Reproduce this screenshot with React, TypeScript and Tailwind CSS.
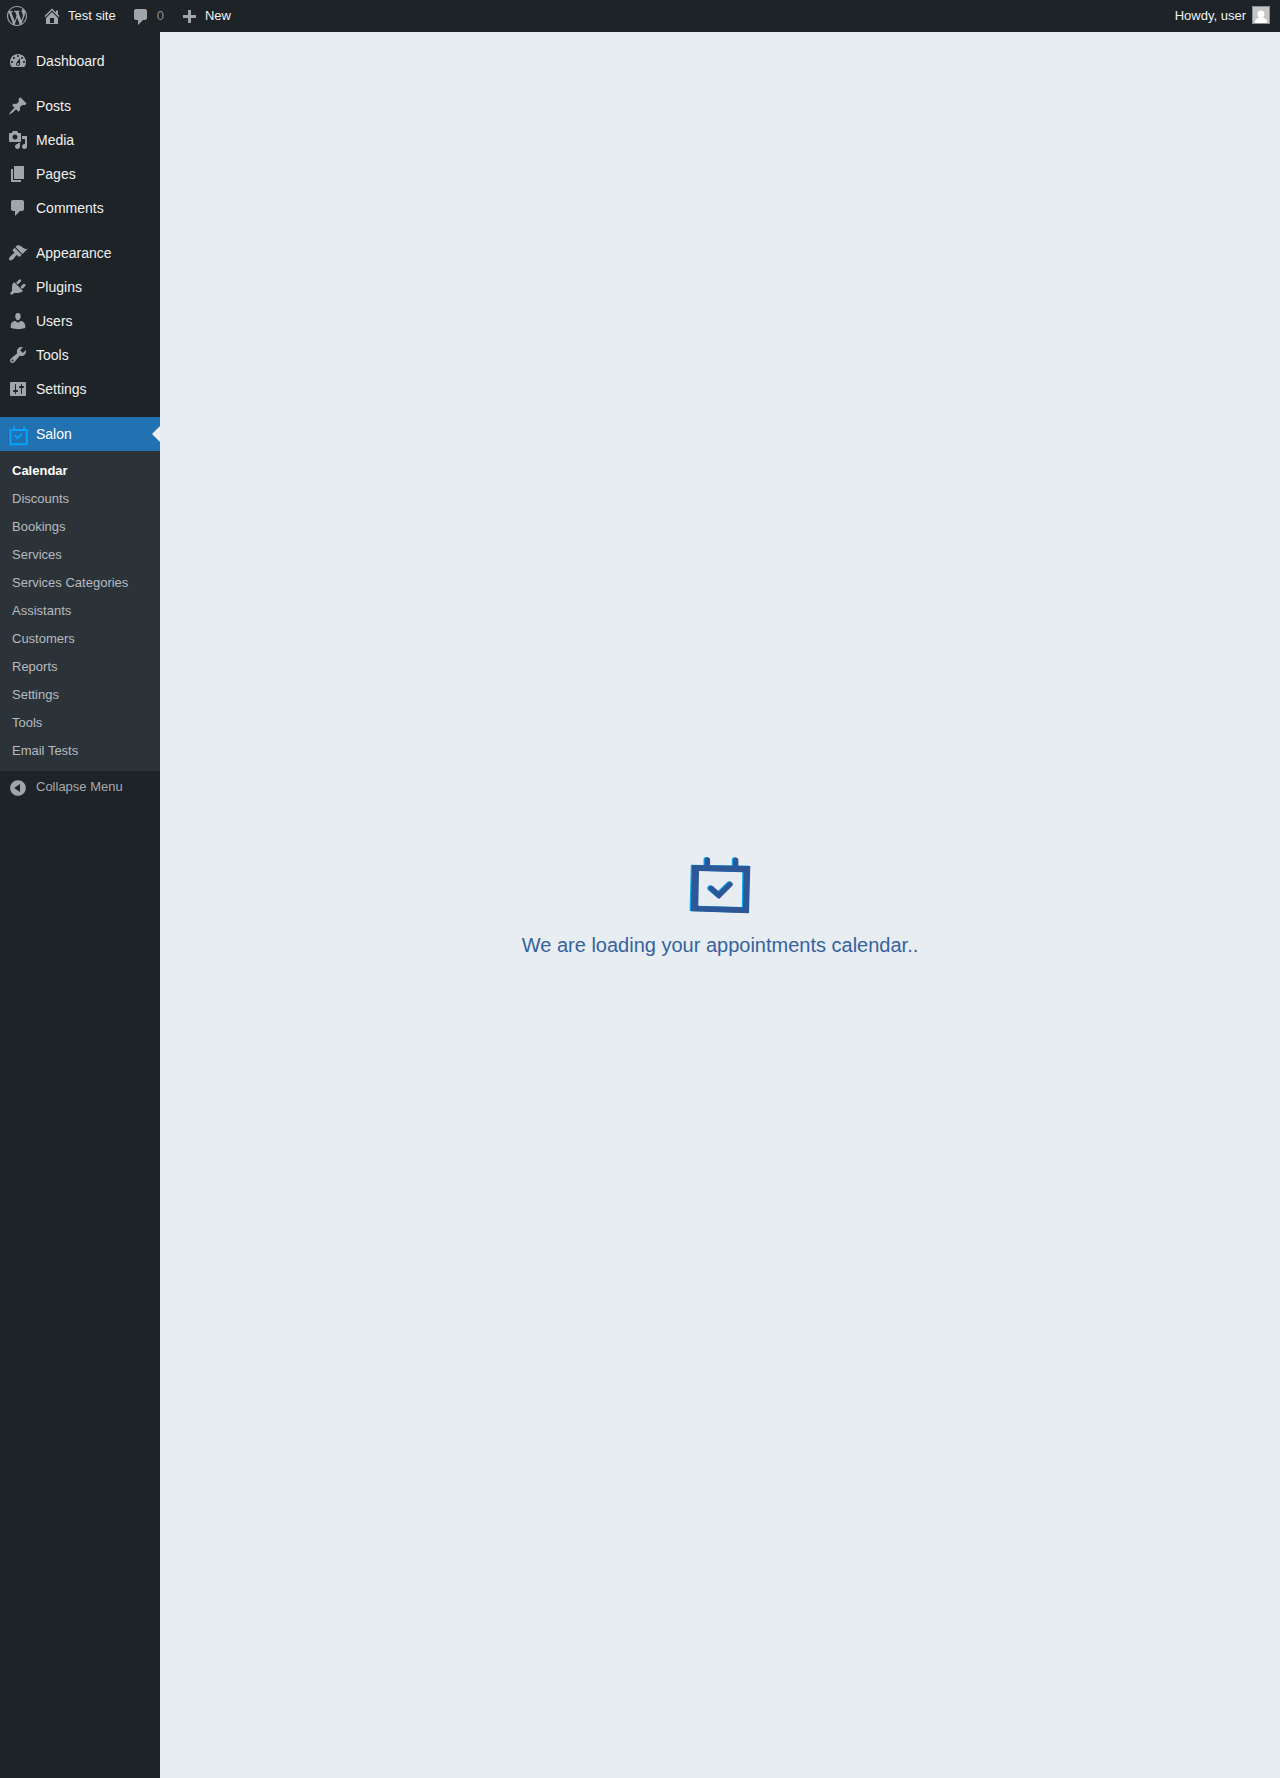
import React from "react";

const ICONS = {
  wordpress:
    "M20 10c0-5.51-4.49-10-10-10C4.48 0 0 4.49 0 10c0 5.52 4.48 10 10 10 5.51 0 10-4.48 10-10zM7.78 15.37L4.37 6.22c.55-.02 1.17-.08 1.17-.08.5-.06.44-1.13-.06-1.11 0 0-1.45.11-2.37.11-.18 0-.37 0-.58-.01C4.12 2.69 6.87 1.11 10 1.11c2.33 0 4.45.87 6.05 2.34-.68-.11-1.65.39-1.65 1.58 0 .74.45 1.36.9 2.1.35.61.55 1.36.55 2.46 0 1.49-1.4 5-1.4 5l-3.03-8.37c.54-.02.82-.17.82-.17.5-.05.44-1.25-.06-1.22 0 0-1.44.12-2.38.12-.87 0-2.33-.12-2.33-.12-.5-.03-.56 1.2-.06 1.22l.92.08 1.26 3.41zM17.41 10c.24-.64.74-1.87.43-4.25.7 1.29 1.05 2.71 1.05 4.25 0 3.29-1.73 6.24-4.4 7.78.97-2.59 1.94-5.2 2.92-7.78zM6.1 18.09C3.12 16.65 1.11 13.53 1.11 10c0-1.3.23-2.48.72-3.59C3.25 10.3 4.67 14.2 6.1 18.09zm4.03-6.63l2.58 6.98c-.86.29-1.76.45-2.71.45-.79 0-1.57-.11-2.29-.33.81-2.38 1.62-4.74 2.42-7.1z",
  home: "M16 8.5l1.53 1.53-1.06 1.06L10 4.6l-6.47 6.49-1.06-1.06L10 2.5l4 4v-2h2v4zm-6-2.46l6 5.99V18H4v-5.97zM12 17v-5H8v5h4z",
  comment:
    "M5 2h9c1.1 0 2 .9 2 2v7c0 1.1-.9 2-2 2h-2l-5 5v-5H5c-1.1 0-2-.9-2-2V4c0-1.1.9-2 2-2z",
  plus: "M17 7v3h-5v5H9v-5H4V7h5V2h3v5h5z",
  dashboard:
    "M3.76 16h12.48c1.1-1.37 1.76-3.11 1.76-5 0-4.42-3.58-8-8-8s-8 3.58-8 8c0 1.89.66 3.63 1.76 5zM10 4c.55 0 1 .45 1 1s-.45 1-1 1-1-.45-1-1 .45-1 1-1zM6 6c.55 0 1 .45 1 1s-.45 1-1 1-1-.45-1-1 .45-1 1-1zm8 0c.55 0 1 .45 1 1s-.45 1-1 1-1-.45-1-1 .45-1 1-1zm-5.37 5.55L12 7v6c0 1.1-.9 2-2 2s-2-.9-2-2c0-.57.24-1.08.63-1.45zM4 10c.55 0 1 .45 1 1s-.45 1-1 1-1-.45-1-1 .45-1 1-1zm12 0c.55 0 1 .45 1 1s-.45 1-1 1-1-.45-1-1 .45-1 1-1zm-5 3c0-.55-.45-1-1-1s-1 .45-1 1 .45 1 1 1 1-.45 1-1z",
  post: "M10.44 3.02l1.82-1.82 6.36 6.35-1.83 1.82c-1.05-.68-2.48-.57-3.41.36l-.75.75c-.92.93-1.04 2.35-.35 3.41l-1.83 1.82-2.41-2.41-2.8 2.79c-.42.42-3.38 2.71-3.8 2.29s1.86-3.39 2.28-3.81l2.79-2.79L4.1 9.36l1.83-1.82c1.05.69 2.48.57 3.4-.36l.75-.75c.93-.92 1.05-2.35.36-3.41z",
  media:
    "M13 11V4c0-.55-.45-1-1-1h-1.67L9 1H5L3.67 3H2c-.55 0-1 .45-1 1v7c0 .55.45 1 1 1h10c.55 0 1-.45 1-1zM7 4.5c1.38 0 2.5 1.12 2.5 2.5S8.38 9.5 7 9.5 4.5 8.38 4.5 7 5.62 4.5 7 4.5zM14 6h5v10.5c0 1.38-1.12 2.5-2.5 2.5S14 17.88 14 16.5s1.12-2.5 2.5-2.5c.17 0 .34.02.5.05V9h-3V6zm-4 8.05V13h2v3.5c0 1.38-1.12 2.5-2.5 2.5S7 17.88 7 16.5 8.12 14 9.5 14c.17 0 .34.02.5.05z",
  page: "M6 15V2h10v13H6zm-1 1h8v2H3V5h2v11z",
  appearance:
    "M14.48 11.06L7.41 3.99l1.5-1.5c.5-.56 2.3-.47 3.51.32 1.21.8 1.43 1.28 2.91 2.1 1.18.64 2.45 1.26 4.45.85zm-.71.71L6.7 4.7 4.93 6.47c-.39.39-.39 1.02 0 1.41l1.06 1.06c.39.39.39 1.03 0 1.42-.6.6-1.43 1.11-2.21 1.69-.35.26-.7.53-1.01.84C1.43 14.23.4 16.08 1.4 17.07c.99 1 2.84-.03 4.18-1.36.31-.31.58-.66.85-1.02.57-.78 1.08-1.61 1.69-2.21.39-.39 1.02-.39 1.41 0l1.06 1.06c.39.39 1.02.39 1.41 0z",
  plugins:
    "M13.11 4.36L9.87 7.6 8 5.73l3.24-3.24c.35-.34 1.05-.2 1.56.32.52.51.66 1.21.31 1.55zm-8 1.77l.91-1.12 9.01 9.01-1.19.84c-.71.71-2.63 1.16-3.82 1.16H6.14L4.9 17.26c-.59.59-1.54.59-2.12 0-.59-.58-.59-1.53 0-2.12l1.24-1.24v-3.88c0-1.13.4-3.19 1.09-3.89zm7.26 3.97l3.24-3.24c.34-.35 1.04-.21 1.55.31.52.51.66 1.21.31 1.55l-3.24 3.25z",
  users:
    "M10 9.25c-2.27 0-2.73-3.44-2.73-3.44C7 4.02 7.82 2 9.97 2c2.16 0 2.98 2.02 2.71 3.81 0 0-.41 3.44-2.68 3.44zm0 2.57L12.72 10c2.39 0 4.52 2.33 4.52 4.53v2.49s-3.65 1.13-7.24 1.13c-3.65 0-7.24-1.13-7.24-1.13v-2.49c0-2.25 1.94-4.48 4.47-4.48z",
  tools:
    "M16.68 9.77c-1.34 1.34-3.3 1.67-4.95.99l-5.41 6.52c-.99.99-2.59.99-3.58 0s-.99-2.59 0-3.57l6.52-5.42c-.68-1.65-.35-3.61.99-4.95 1.28-1.28 3.12-1.62 4.72-1.06l-2.89 2.89 2.82 2.82 2.86-2.87c.53 1.58.18 3.39-1.08 4.65zM3.81 16.21c.4.39 1.04.39 1.43 0 .4-.4.4-1.04 0-1.43-.39-.4-1.03-.4-1.43 0-.39.39-.39 1.03 0 1.43z",
  settings:
    "M18 16V4c0-.55-.45-1-1-1H3c-.55 0-1 .45-1 1v12c0 .55.45 1 1 1h14c.55 0 1-.45 1-1zM8 11h1c.55 0 1 .45 1 1s-.45 1-1 1H8v1.5c0 .28-.22.5-.5.5s-.5-.22-.5-.5V13H6c-.55 0-1-.45-1-1s.45-1 1-1h1V5.5c0-.28.22-.5.5-.5s.5.22.5.5V11zm5-2h-1c-.55 0-1-.45-1-1s.45-1 1-1h1V5.5c0-.28.22-.5.5-.5s.5.22.5.5V7h1c.55 0 1 .45 1 1s-.45 1-1 1h-1v5.5c0 .28-.22.5-.5.5s-.5-.22-.5-.5V9z",
  collapse:
    "M10 2.16c4.33 0 7.84 3.51 7.84 7.84s-3.51 7.84-7.84 7.84S2.16 14.33 2.16 10 5.71 2.16 10 2.16zm2 11.72V6.12L6.18 9.97z",
};

type IconName = keyof typeof ICONS;

function Icon({ name }: { name: IconName }) {
  return (
    <svg viewBox="0 0 20 20" className="size-5 shrink-0 fill-[#a0a5aa]" aria-hidden="true">
      <path fillRule="evenodd" d={ICONS[name]} />
    </svg>
  );
}

function SalonIcon() {
  return (
    <svg viewBox="0 0 20 20" className="size-5 shrink-0" fill="none" aria-hidden="true">
      <path stroke="#2b5a9e" strokeWidth="2" d="M1.500 4v15M5 .5v3M15 .5v3" />
      <g stroke="#04a4ff" strokeWidth="2">
        <path d="M2.200 4h16.600v14.200H2.200z" />
        <path strokeWidth="1.800" d="M6 .2v3.500M16 .2v3.500M6.600 9.300l2.800 2.900L14 7.800" />
      </g>
    </svg>
  );
}

const LOGO_FRAME = "M2 8L60.300 9 59 56.300.8 54.300zM9 14L8.300 49 53 50.300 53.500 15.300z";
const LOGO_STROKES = "M17.400 3v7M45.700 3.300v7M21.200 31.400l7.800 6.800 11-10.800";

function LoadingLogo() {
  return (
    <svg viewBox="0 0 60 58" className="h-[58px] w-[60px] overflow-visible" aria-hidden="true">
      <g transform="translate(-1.200 -.3)" fill="#08a8f4" stroke="#08a8f4">
        <path fillRule="evenodd" stroke="none" d={LOGO_FRAME} />
        <path fill="none" strokeWidth="5.400" strokeLinecap="round" d={LOGO_STROKES} />
      </g>
      <g fill="#2d5796" stroke="#2d5796">
        <path fillRule="evenodd" stroke="none" d={LOGO_FRAME} />
        <path fill="none" strokeWidth="5.400" strokeLinecap="round" d={LOGO_STROKES} />
      </g>
    </svg>
  );
}

const GROUPS: { label: string; icon: IconName }[][] = [
  [{ label: "Dashboard", icon: "dashboard" }],
  [
    { label: "Posts", icon: "post" },
    { label: "Media", icon: "media" },
    { label: "Pages", icon: "page" },
    { label: "Comments", icon: "comment" },
  ],
  [
    { label: "Appearance", icon: "appearance" },
    { label: "Plugins", icon: "plugins" },
    { label: "Users", icon: "users" },
    { label: "Tools", icon: "tools" },
    { label: "Settings", icon: "settings" },
  ],
];

const SUBMENU = [
  "Calendar",
  "Discounts",
  "Bookings",
  "Services",
  "Services Categories",
  "Assistants",
  "Customers",
  "Reports",
  "Settings",
  "Tools",
  "Email Tests",
];

function AdminBar() {
  return (
    <header className="flex h-8 shrink-0 items-stretch bg-[#1d2327] text-[13px] leading-8 text-[#f0f0f1]">
      <a href="#about" aria-label="About WordPress" className="flex px-[7px] pt-1.5">
        <Icon name="wordpress" />
      </a>
      <a href="#site" className="flex gap-1.5 px-2">
        <span className="pt-1.5"><Icon name="home" /></span>
        <span>Test site</span>
      </a>
      <a href="#comments" className="flex gap-1.5 px-[7px]">
        <span className="pt-[7px]"><Icon name="comment" /></span>
        <span className="text-[#8a8f94]">0</span>
      </a>
      <a href="#new" className="flex gap-1.5 px-2">
        <span className="pt-2"><Icon name="plus" /></span>
        <span>New</span>
      </a>
      <a href="#profile" className="ml-auto flex gap-1.5 pr-2.5">
        <span>Howdy, user</span>
        <svg viewBox="0 0 18 18" className="mt-1.5 size-[18px]" aria-hidden="true">
          <path fill="#8c8f94" d="M0 0h18v18H0z" />
          <path fill="#c5c5c5" d="M1 1h16v16H1z" />
          <path
            fill="#fff"
            d="M9 4.500c2.200 0 3.500 1.500 3.500 3.500 0 1.500-.7 2.600-1.600 3.300.3 1.200 3.900 1.300 4.100 4.200V17H3v-1.500c.2-2.900 3.800-3 4.100-4.200C6.200 10.600 5.500 9.500 5.500 8c0-2 1.300-3.500 3.500-3.500z"
          />
        </svg>
      </a>
    </header>
  );
}

function Sidebar() {
  return (
    <nav aria-label="Main menu" className="w-40 shrink-0 bg-[#1d2327] pt-3 text-sm text-[#f0f0f1]">
      {GROUPS.map((group, i) => (
        <ul key={i} className="mb-[11px]">
          {group.map((item) => (
            <li key={item.label}>
              <a href={"#" + item.label.toLowerCase()} className="flex h-[34px] items-center gap-2 pl-2">
                <Icon name={item.icon} />
                {item.label}
              </a>
            </li>
          ))}
        </ul>
      ))}
      <a href="#salon" className="relative flex h-[34px] items-center gap-2 bg-[#2271b1] pl-2 text-white">
        <span className="pt-1"><SalonIcon /></span>
        Salon
        <span className="absolute top-[9px] right-0 border-y-8 border-r-8 border-y-transparent border-r-[#f0f0f1]" />
      </a>
      <ul className="bg-[#2c3338] py-1.5 text-[13px]">
        {SUBMENU.map((label, i) => (
          <li key={label}>
            <a
              href={"#salon-" + i}
              className={
                i === 0
                  ? "flex h-7 items-center px-3 font-bold text-white"
                  : "flex h-7 items-center px-3 text-[#b5bbc0]"
              }
            >
              {label}
            </a>
          </li>
        ))}
      </ul>
      <button type="button" className="flex h-[34px] w-full gap-2 pl-2 text-[13px] leading-8 text-[#a7aaad]">
        <span className="pt-[7px]"><Icon name="collapse" /></span>
        Collapse Menu
      </button>
    </nav>
  );
}

export default function App() {
  return (
    <div className="flex min-h-screen flex-col font-['Liberation_Sans',Arial,sans-serif]">
      <AdminBar />
      <div className="flex grow">
        <Sidebar />
        <main className="flex grow flex-col items-center justify-center gap-4 bg-[#e7edf1] pt-1.5">
          <LoadingLogo />
          <p className="text-xl text-[#36629f]">We are loading your appointments calendar..</p>
        </main>
      </div>
    </div>
  );
}
